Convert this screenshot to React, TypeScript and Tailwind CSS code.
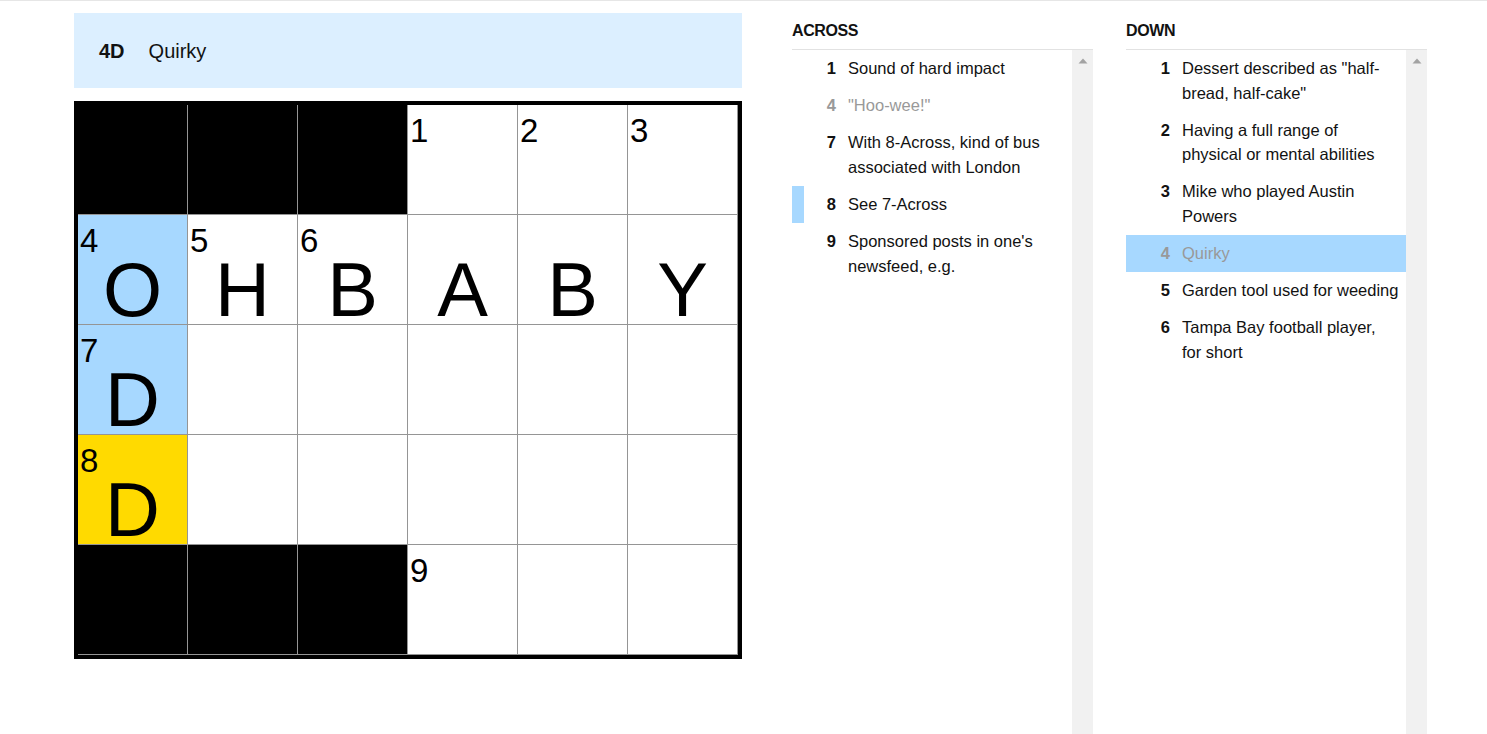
import React from 'react';

type Cell = { black?: boolean; num?: number; letter?: string; hl?: 'blue' | 'yellow' };

const B: Cell = { black: true };

const grid: Cell[][] = [
  [B, B, B, { num: 1 }, { num: 2 }, { num: 3 }],
  [
    { num: 4, letter: 'O', hl: 'blue' },
    { num: 5, letter: 'H' },
    { num: 6, letter: 'B' },
    { letter: 'A' },
    { letter: 'B' },
    { letter: 'Y' },
  ],
  [{ num: 7, letter: 'D', hl: 'blue' }, {}, {}, {}, {}, {}],
  [{ num: 8, letter: 'D', hl: 'yellow' }, {}, {}, {}, {}, {}],
  [B, B, B, { num: 9 }, {}, {}],
];

interface Clue {
  num: number;
  text: string;
  filled?: boolean;
  related?: boolean;
  active?: boolean;
  nowrap?: boolean;
}

const across: Clue[] = [
  { num: 1, text: 'Sound of hard impact' },
  { num: 4, text: '"Hoo-wee!"', filled: true },
  { num: 7, text: 'With 8-Across, kind of bus associated with London' },
  { num: 8, text: 'See 7-Across', related: true },
  { num: 9, text: "Sponsored posts in one's newsfeed, e.g." },
];

const down: Clue[] = [
  { num: 1, text: 'Dessert described as "half-bread, half-cake"' },
  { num: 2, text: 'Having a full range of physical or mental abilities' },
  { num: 3, text: 'Mike who played Austin Powers' },
  { num: 4, text: 'Quirky', filled: true, active: true },
  { num: 5, text: 'Garden tool used for weeding', nowrap: true },
  { num: 6, text: 'Tampa Bay football player, for short' },
];

const cellBg = (c: Cell) => {
  if (c.black) return 'bg-black';
  if (c.hl === 'blue') return 'bg-[#a7d8ff]';
  if (c.hl === 'yellow') return 'bg-[#ffda00]';
  return 'bg-white';
};

const ClueList: React.FC<{ title: string; clues: Clue[] }> = ({ title, clues }) => (
  <section className="w-[301px] h-full flex flex-col pt-[20px]">
    <h3 className="text-[16px] leading-[20px] font-bold uppercase tracking-[-0.4px] text-[#121212] pb-[8px] border-b border-[#e2e2e2]">
      {title}
    </h3>
    <div className="flex flex-1 min-h-0">
      <ol className="flex-1 min-w-0">
        {clues.map((clue) => (
          <li
            key={clue.num}
            className={`flex border-l-[12px] py-[6.3px] pr-[10px] text-[16.5px] leading-[24.5px] ${
              clue.related ? 'border-[#a7d8ff]' : 'border-transparent'
            } ${clue.active ? 'bg-[#a7d8ff]' : ''} ${clue.filled ? 'text-[#999999]' : 'text-[#121212]'}`}
          >
            <span className="w-[32px] shrink-0 text-right font-bold">{clue.num}</span>
            <span className={`ml-[12px] min-w-0 ${clue.nowrap ? 'whitespace-nowrap' : ''}`}>{clue.text}</span>
          </li>
        ))}
      </ol>
      <div className="w-[21px] shrink-0 bg-[#f1f1f1] flex justify-center pt-[8px]">
        <svg width="10" height="6" viewBox="0 0 10 6">
          <path d="M5 0.5 L9.5 5.5 L0.5 5.5 Z" fill="#a3a3a3" />
        </svg>
      </div>
    </div>
  </section>
);

export default function App() {
  return (
    <div className="h-screen overflow-hidden bg-white border-t border-[#e6e6e6] font-['Liberation_Sans',Arial,sans-serif]">
      <div className="flex h-full pl-[74px]">
        <div className="w-[668px] pt-[12px]">
          <div className="h-[75px] bg-[#dcefff] flex items-center pl-[25px] text-[20px] text-[#121212]">
            <span className="font-bold mr-[24px]">4D</span>
            <span>Quirky</span>
          </div>
          <div className="mt-[13px] border-4 border-black w-[668px]">
            {grid.map((row, r) => (
              <div key={r} className="flex">
                {row.map((c, i) => (
                  <div
                    key={i}
                    className={`relative w-[110px] h-[110px] border-r border-b border-[#959595] flex items-end justify-center ${cellBg(c)}`}
                  >
                    {c.num && (
                      <span className="absolute top-[9px] left-[2px] text-[33px] leading-none text-black">
                        {c.num}
                      </span>
                    )}
                    {c.letter && <span className="text-[76px] leading-[68px] text-black">{c.letter}</span>}
                  </div>
                ))}
              </div>
            ))}
          </div>
        </div>
        <div className="ml-[50px] h-full">
          <ClueList title="Across" clues={across} />
        </div>
        <div className="ml-[33px] h-full">
          <ClueList title="Down" clues={down} />
        </div>
      </div>
    </div>
  );
}
